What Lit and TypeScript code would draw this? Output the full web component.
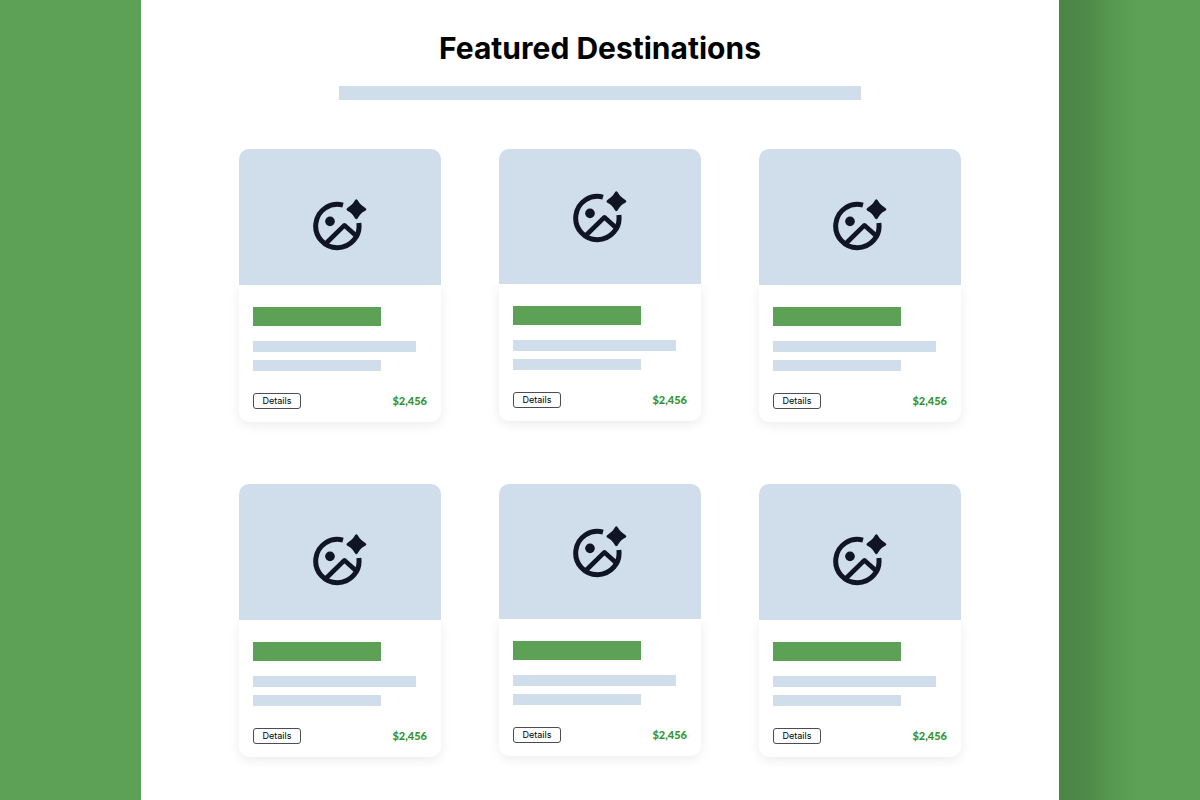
import { LitElement, html, css } from "lit";
import { customElement, property } from "lit/decorators.js";

interface Destination {
  id: number;
  price: string;
  raised: boolean;
}

const destinations: Destination[] = [
  { id: 1, price: "$2,456", raised: false },
  { id: 2, price: "$2,456", raised: true },
  { id: 3, price: "$2,456", raised: false },
  { id: 4, price: "$2,456", raised: false },
  { id: 5, price: "$2,456", raised: true },
  { id: 6, price: "$2,456", raised: false },
];

@customElement("destination-card")
export class DestinationCard extends LitElement {
  @property() price = "";
  @property({ type: Boolean, reflect: true }) raised = false;

  static styles = css`
    :host {
      display: block;
    }
    .photo {
      display: flex;
      align-items: center;
      justify-content: center;
      box-sizing: border-box;
      height: 136px;
      padding-top: 16px;
      border-radius: 10px 10px 0 0;
      background: #d0deeb;
    }
    :host([raised]) .photo {
      height: 135px;
      padding-top: 0;
    }
    .icon {
      display: block;
      width: 54px;
      height: 52px;
    }
    .body {
      padding: 22px 14px 13px;
      border-radius: 0 0 10px 10px;
      background: #fff;
      box-shadow: 0 3px 12px rgba(0, 0, 0, 0.08);
      clip-path: inset(0 -24px -24px -24px);
    }
    .title {
      width: 73.5%;
      height: 19px;
      margin-bottom: 15px;
      background: #5ca155;
    }
    .line {
      height: 11px;
      margin-bottom: 8px;
      background: #d0deeb;
    }
    .long {
      width: 93.5%;
    }
    .short {
      width: 73.5%;
    }
    .footer {
      display: flex;
      align-items: center;
      justify-content: space-between;
      margin-top: 22px;
    }
    .details {
      box-sizing: border-box;
      width: 48px;
      height: 16px;
      padding: 0;
      border: 1px solid #4b4b5a;
      border-radius: 3px;
      background: #fff;
      color: #000;
      font: 400 9px/14px Inter, sans-serif;
      text-align: center;
      cursor: pointer;
    }
    .price {
      color: #35932f;
      font: 900 11px/16px Lato, sans-serif;
    }
  `;

  render() {
    return html`
      <div class="photo">
        <svg class="icon" viewBox="39 57 162 156" fill="none" aria-hidden="true">
          <path
            d="M129 75.3A65 65 0 1 0 176.5 129"
            stroke="#101524"
            stroke-width="15"
          />
          <path
            d="M79 189L133 136L169 168"
            stroke="#101524"
            stroke-width="14"
            stroke-linejoin="round"
          />
          <circle cx="90" cy="124" r="14.5" fill="#101524" />
          <path
            d="M165 61Q169 54 173 61L179 70Q183 75 189 79L196 84Q202 88 196 92L189 96Q183 100 179 106L173 115Q169 121 165 115L159 106Q155 100 149 96L142 92Q137 88 142 84L149 79Q155 75 159 70Z"
            fill="#101524"
          />
        </svg>
      </div>
      <div class="body">
        <div class="title"></div>
        <div class="line long"></div>
        <div class="line short"></div>
        <div class="footer">
          <button class="details" type="button">Details</button>
          <span class="price">${this.price}</span>
        </div>
      </div>
    `;
  }
}

@customElement("app-root")
export class AppRoot extends LitElement {
  static styles = css`
    :host {
      display: grid;
      grid-template-columns: 1fr 76.5% 1fr;
      min-height: 100vh;
      background: #5ca155;
    }
    .page {
      display: flex;
      flex-direction: column;
      align-items: center;
      grid-column: 2;
      box-sizing: border-box;
      padding: 28px 24px 43px;
      background: #fff;
    }
    .shade {
      background: linear-gradient(
        to right,
        #4c8546 0,
        #4e8648 18px,
        #508d4a 34px,
        #56984f 50px,
        #5ca155 80px
      );
    }
    h1 {
      margin: 0 0 18px;
      color: #000;
      font: 700 30px/40px Inter, sans-serif;
      text-align: center;
    }
    .subtitle {
      width: 60%;
      height: 14px;
      margin-bottom: 49px;
      background: #d0deeb;
    }
    .cards {
      display: grid;
      grid-template-columns: repeat(3, 1fr);
      align-items: start;
      gap: 62px 58px;
      width: 100%;
      max-width: 722px;
    }
  `;

  render() {
    return html`
      <main class="page">
        <h1>Featured Destinations</h1>
        <div class="subtitle"></div>
        <section class="cards">
          ${destinations.map(
            (d) => html`
              <destination-card .price=${d.price} ?raised=${d.raised}></destination-card>
            `
          )}
        </section>
      </main>
      <div class="shade"></div>
    `;
  }
}
